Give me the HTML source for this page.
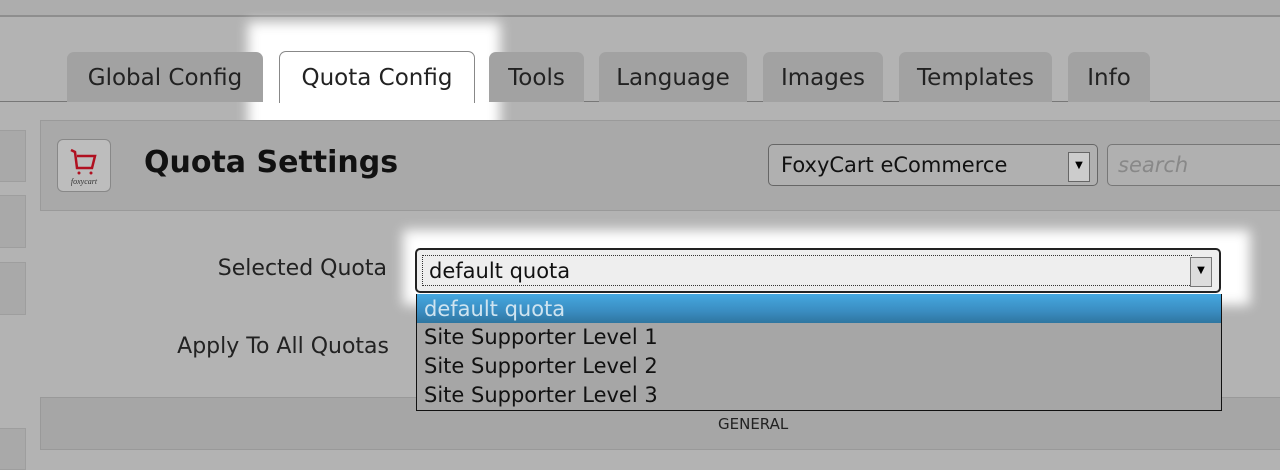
<!DOCTYPE html>
<html><head><style>
body{margin:0;width:1280px;height:462px;overflow:hidden;background:#b3b3b3;font-family:"DejaVu Sans","Liberation Sans",sans-serif;position:relative}
.a{position:absolute}
.tab{position:absolute;top:52px;height:50px;background:#a2a2a2;border-radius:7px 7px 0 0;font-size:23px;color:#222;text-align:center;line-height:52px}
.side{position:absolute;left:0;width:25px;background:#a9a9a9;border:1px solid #9e9e9e;border-left:none}
</style></head><body>
<div class="a" style="left:0;top:0;width:1280px;height:15px;background:#adadad;border-bottom:2px solid #8e8e8e"></div>
<div class="a" style="left:0;top:101px;width:1280px;height:1px;background:#777"></div>
<div class="a" style="left:248px;top:22px;width:252px;height:118px;background:#fff;filter:blur(6px)"></div>
<div class="tab" style="left:67px;width:196px">Global Config</div>
<div class="tab" style="left:279px;width:194px;background:#fff;border:1px solid #888;border-bottom:none;top:51px;height:51px">Quota Config</div>
<div class="tab" style="left:489px;width:95px">Tools</div>
<div class="tab" style="left:599px;width:148px">Language</div>
<div class="tab" style="left:763px;width:120px">Images</div>
<div class="tab" style="left:899px;width:153px">Templates</div>
<div class="tab" style="left:1068px;width:82px">Info</div>
<div class="side" style="top:130px;height:50px"></div>
<div class="side" style="top:195px;height:51px"></div>
<div class="side" style="top:262px;height:51px"></div>
<div class="side" style="top:428px;height:40px"></div>
<div class="a" style="left:40px;top:120px;width:1250px;height:89px;background:#a9a9a9;border:1px solid #9a9a9a"></div>
<div class="a" style="left:57px;top:139px;width:52px;height:51px;background:#bdbdbd;border:1px solid #888;border-radius:6px">
<svg width="52" height="51" viewBox="0 0 52 51"><path d="M13 10 L17 12 L19 28 L34 28 L37 16 L19 16" fill="none" stroke="#b01020" stroke-width="2.5"/><circle cx="21" cy="33" r="1.5" fill="#b01020"/><circle cx="33" cy="33" r="1.5" fill="#b01020"/><text x="26" y="44" font-size="8" font-style="italic" text-anchor="middle" fill="#333" font-family="Liberation Serif">foxycart</text></svg></div>
<div class="a" style="left:144px;top:145px;font-size:30px;font-weight:bold;color:#111">Quota Settings</div>
<div class="a" style="left:768px;top:144px;width:330px;height:42px;border:1px solid #666;border-radius:5px;background:#b0b0b0;box-sizing:border-box"><span class="a" style="left:12px;top:8px;font-size:21px;color:#111">FoxyCart eCommerce</span><div class="a" style="left:299px;top:7px;width:22px;height:30px;background:#ccc;border:1px solid #666;box-sizing:border-box;font-size:10px;text-align:center;line-height:26px">▼</div></div>
<div class="a" style="left:1107px;top:144px;width:180px;height:42px;border:1px solid #777;border-radius:5px;box-sizing:border-box;background:#b0b0b0"><span class="a" style="left:10px;top:8px;font-size:21px;font-style:italic;color:#888">search</span></div>
<div class="a" style="left:40px;top:397px;width:1250px;height:51px;background:#a6a6a6;border:1px solid #999"><span class="a" style="left:677px;top:17px;font-size:15px;color:#222">GENERAL</span></div>
<div class="a" style="left:403px;top:230px;width:847px;height:75px;background:#fff;filter:blur(6px)"></div>
<div class="a" style="left:0;width:387px;text-align:right;top:256px;font-size:22px;color:#222">Selected Quota</div>
<div class="a" style="left:0;width:389px;text-align:right;top:334px;font-size:22px;color:#222">Apply To All Quotas</div>
<div class="a" style="left:415px;top:248px;width:806px;height:45px;border:2px solid #222;border-radius:5px;background:#eee;box-sizing:border-box"><div class="a" style="left:5px;top:5px;width:770px;height:31px;border:1px dotted #333;box-sizing:border-box"></div><span class="a" style="left:12px;top:9px;font-size:21px;color:#111">default quota</span><div class="a" style="left:773px;top:7px;width:22px;height:30px;background:#ddd;border:1px solid #777;box-sizing:border-box;font-size:10px;text-align:center;line-height:26px">▼</div></div>
<div class="a" style="left:416px;top:294px;width:804px;height:116px;background:#a6a6a6;border:1px solid #111;border-top:none;font-size:21px;color:#111">
<div style="height:29px;background:linear-gradient(#45a8e0,#3a8cc0 60%,#2f76a0);color:#cfe4f0;padding-left:7px;line-height:30px">default quota</div>
<div style="padding-left:7px;line-height:29px">Site Supporter Level 1</div>
<div style="padding-left:7px;line-height:29px">Site Supporter Level 2</div>
<div style="padding-left:7px;line-height:28px">Site Supporter Level 3</div>
</div>
</body></html>
